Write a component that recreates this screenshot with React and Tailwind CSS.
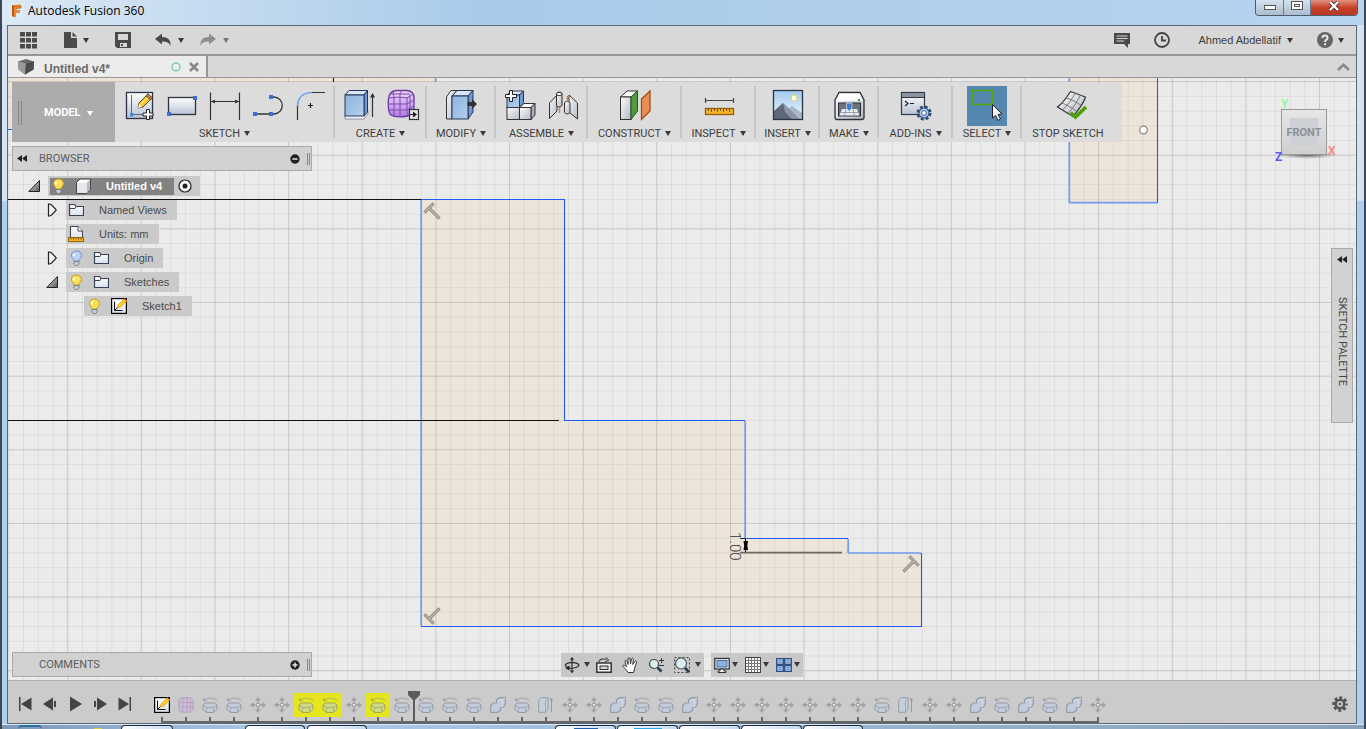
import React from "react";

const UI = "font-['Roboto','Liberation_Sans',sans-serif]";

function Caret({ className = "text-[#3a3a3a]" }) {
  return (
    <svg width="6" height="5" viewBox="0 0 6 5" className={`shrink-0 ${className}`} aria-hidden="true">
      <path d="M0 0H6L3 5Z" fill="currentColor" />
    </svg>
  );
}

function Icon({ size = 16, children, className = "" }) {
  return (
    <svg width={size} height={size} viewBox={`0 0 ${size} ${size}`} className={`shrink-0 ${className}`} fill="none" aria-hidden="true">
      {children}
    </svg>
  );
}

/* ---------- gradients shared by all icons ---------- */
function Defs() {
  return (
    <svg width="0" height="0" className="absolute" aria-hidden="true">
      <defs>
        <linearGradient id="paper" x1="0" y1="0" x2="0" y2="1"><stop offset="0" stopColor="#fff" /><stop offset="1" stopColor="#b9c3d4" /></linearGradient>
        <linearGradient id="sheet" x1="0" y1="0" x2="0" y2="1"><stop offset="0" stopColor="#fff" /><stop offset="1" stopColor="#dbe2ec" /></linearGradient>
        <linearGradient id="blue" x1="0" y1="0" x2="1" y2="1"><stop offset="0" stopColor="#8db3df" /><stop offset="1" stopColor="#b5cfec" /></linearGradient>
        <linearGradient id="grey" x1="0" y1="0" x2="1" y2="1"><stop offset="0" stopColor="#fbfbfc" /><stop offset="1" stopColor="#b4bac4" /></linearGradient>
        <linearGradient id="violet" x1="0" y1="0" x2="0" y2="1"><stop offset="0" stopColor="#ecdcf8" /><stop offset="1" stopColor="#b67be6" /></linearGradient>
        <linearGradient id="sky" x1="0" y1="0" x2="0" y2="1"><stop offset="0" stopColor="#9fc9ee" /><stop offset="1" stopColor="#f2f9fd" /></linearGradient>
        <linearGradient id="tri" x1="0" y1="0" x2="1" y2="1"><stop offset="0" stopColor="#eee" /><stop offset="1" stopColor="#555" /></linearGradient>
      </defs>
    </svg>
  );
}

const Pencil = () => (
  <g>
    <path d="M19 22L20 17L29 8L33 12L24 21Z" fill="#fbc62b" stroke="#5b4417" />
    <path d="M27 10L29 7.500L33.500 12L31.500 14Z" fill="#b97d4a" stroke="#5b4417" strokeWidth=".8" />
    <path d="M19 22L20 18L23 21Z" fill="#fff" />
    <path d="M21.500 18.500L28.500 11.500" stroke="#fff1a8" />
  </g>
);

const toolIcons = {
  sketch: (
    <>
      <rect x="7.500" y="6.500" width="26" height="26" fill="url(#paper)" stroke="#2b3246" strokeWidth="1.300" />
      <path d="M12.500 9V28.500H30" stroke="#5f6b86" />
      <rect x="11" y="27" width="3.500" height="3.500" fill="#3f8ce0" />
      <Pencil />
      <path d="M27.500 23.500h3v3.500h3.500v3h-3.500v3.500h-3v-3.500h-3.500v-3h3.500z" fill="#fff" stroke="#222" />
    </>
  ),
  rect: (
    <>
      <rect x="6.500" y="11.500" width="27" height="17" fill="url(#paper)" stroke="#2e3340" strokeWidth="1.300" />
      <rect x="31" y="10" width="4" height="4" fill="#3b6fd0" />
      <rect x="5" y="26" width="4" height="4" fill="#3b6fd0" />
    </>
  ),
  dimension: (
    <>
      <path d="M5.500 6.500V34M34.500 6.500V34" stroke="#333" strokeWidth="1.200" />
      <path d="M6 15.500H34" stroke="#333" />
      <path d="M6 15.500L10 13.500V17.500ZM34 15.500L30 13.500V17.500Z" fill="#333" />
    </>
  ),
  line: (
    <>
      <path d="M7 28H26C37 27 37 12 26 11H23" stroke="#333" strokeWidth="1.300" />
      <rect x="5" y="26" width="4" height="4" fill="#3b6fd0" />
      <rect x="21" y="26" width="4" height="4" fill="#3b6fd0" />
      <rect x="21" y="9" width="4" height="4" fill="#3b6fd0" />
    </>
  ),
  fillet: (
    <>
      <path d="M6.500 34V20M20.500 6.500H34" stroke="#333" strokeWidth="1.200" />
      <path d="M6.500 20C7 11 11 7 20.500 6.500" stroke="#6a9ee8" strokeWidth="1.600" />
      <path d="M19.500 17V22M17 19.500H22" stroke="#222" strokeWidth="1.200" />
    </>
  ),
  extrude: (
    <>
      <path d="M6 30V33H25L29 28V25" fill="#f4f6f8" stroke="#8a93a5" />
      <path d="M6 9L10 4.500H28.500L25 9Z" fill="#dce8f6" stroke="#223658" />
      <path d="M25 9L28.500 4.500V26L25 30Z" fill="#6f9bd0" stroke="#223658" />
      <rect x="6" y="9" width="19" height="21" fill="url(#blue)" stroke="#223658" />
      <path d="M33.500 9V31" stroke="#333" strokeWidth="1.200" />
      <path d="M33.500 7L31 11.500H36Z" fill="#333" />
    </>
  ),
  form: (
    <>
      <path d="M6.500 13C7 8 10 4.500 15 4.500H25C30 5 32 8 32 12V22C32 25 29 28 26 30C20 31 12 31 9 29C6 27 6 17 6.500 13Z" fill="url(#violet)" stroke="#6b3aa0" strokeWidth="1.300" />
      <path d="M7 12C12 11 20 11 25 12C28 10 30 9 31 8M25 12V30M12 5C10 8 12 10 12 12V30M20 4.500C17 8 18 10 18 12V30M8 8H28M7 18H25L32 14M7 24H25L32 20M28 9V28" stroke="#7d48b3" />
      <rect x="27.500" y="23.500" width="9" height="10" fill="#e4e4e4" stroke="#333" strokeWidth="1.200" />
      <path d="M28 28H31V25.500L35 28.500L31 31.500V29H28Z" fill="#222" />
    </>
  ),
  modify: (
    <>
      <path d="M5.500 11L10 4.500H16L11 10V33H5.500Z" fill="url(#grey)" stroke="#333" />
      <path d="M11 10L16 4.500H32L27 10Z" fill="#d7e5f5" stroke="#223658" />
      <path d="M27 10L32 4.500V26L27 33Z" fill="#6f9bd0" stroke="#223658" />
      <rect x="11" y="10" width="16" height="23" fill="url(#blue)" stroke="#223658" />
      <path d="M26.500 16H31V13L36 18L31 23V20H26.500Z" fill="#333" />
    </>
  ),
  assemble: (
    <>
      <path d="M7 9L11 5H23.500L19.500 9Z" fill="#dce8f6" stroke="#223658" />
      <path d="M19.500 9L23.500 5V17L19.500 21Z" fill="#6f9bd0" stroke="#223658" />
      <rect x="7" y="9" width="12.500" height="12.500" fill="url(#blue)" stroke="#223658" />
      <path d="M20 21.500L24 17.500H35L31 21.500Z" fill="#fff" stroke="#333" />
      <path d="M31 21.500L35 17.500V29L31 33.500Z" fill="#a9afb9" stroke="#333" />
      <rect x="7" y="21.500" width="12.500" height="12" fill="url(#grey)" stroke="#333" />
      <rect x="19.500" y="21.500" width="11.500" height="12" fill="url(#grey)" stroke="#333" />
      <path d="M9.500 4.500h3v4h4v3h-4v4h-3v-4h-4v-3h4z" fill="#fff" stroke="#222" />
    </>
  ),
  joint: (
    <>
      <path d="M6.500 17L14 9V25L6.500 32.500Z" fill="url(#grey)" stroke="#333" />
      <path d="M13.500 8C13.500 5.500 19 5.500 19 8V19C19 21.500 13.500 21.500 13.500 19Z" fill="url(#grey)" stroke="#333" />
      <ellipse cx="16.200" cy="8" rx="2.800" ry="1.600" fill="#fff" stroke="#333" />
      <path d="M26 9L34.500 17V33L26 26Z" fill="url(#grey)" stroke="#333" />
      <path d="M21.500 17C21.500 15 27 15 27 17V26C27 28.500 21.500 28.500 21.500 26Z" fill="url(#grey)" stroke="#333" />
      <path d="M16.500 21V27M24.500 10V16" stroke="#e07b28" strokeWidth="1.400" />
    </>
  ),
  construct: (
    <>
      <path d="M5.500 11L12 5H22.500L16 11Z" fill="#fff" stroke="#333" />
      <rect x="5.500" y="11" width="10.500" height="22.500" fill="url(#grey)" stroke="#333" />
      <path d="M16 11L22.500 5V25L16 33.500Z" fill="#4f9b3f" stroke="#26541d" />
      <path d="M26.500 13L35 5V25L26.500 33.500Z" fill="#e98f55" stroke="#a04c1b" strokeWidth="1.300" />
    </>
  ),
  inspect: (
    <>
      <path d="M6.500 12V17M34.500 12V17M6.500 14.500H34.500" stroke="#444" strokeWidth="1.200" />
      <rect x="6.500" y="22.500" width="28" height="6" fill="#f3b72a" stroke="#96590d" strokeWidth="1.300" />
      <path d="M9.500 23V25M12.500 23V26M15.500 23V25M18.500 23V26M21.500 23V25M24.500 23V26M27.500 23V25M30.500 23V26" stroke="#7b4a0d" />
    </>
  ),
  insert: (
    <>
      <rect x="5.500" y="4.500" width="29" height="29" fill="url(#sky)" />
      <circle cx="26" cy="12" r="3" fill="#fffbe0" stroke="#f3cf63" />
      <path d="M16 26L24 20L34 27V33H16Z" fill="#a9b8c9" />
      <path d="M6 25L15 17L31 33H6Z" fill="#5d6878" />
      <path d="M15 17L31 33H24L17 26Z" fill="#8b97a7" />
      <rect x="5.500" y="4.500" width="29" height="29" stroke="#2c3340" strokeWidth="1.300" />
    </>
  ),
  make: (
    <>
      <path d="M6 14L10 6.500H31L35 14V31C35 33 34 33.500 33 33.500H8C6 33.500 6 32 6 31Z" fill="url(#grey)" stroke="#2c2f36" strokeWidth="1.300" />
      <path d="M7 14.500L10.500 7.500H30.500L34 14.500Z" fill="#fff" />
      <rect x="9.500" y="17" width="22" height="13" fill="#6d727a" stroke="#2c2f36" />
      <path d="M13 23H28L30.500 29.500H10.500Z" fill="#e9edf2" />
      <path d="M12 26.500H29M17 23L15.500 29M24 23L25.500 29" stroke="#8a919c" strokeWidth=".8" />
      <path d="M17.500 17H23V22L20.200 25.500L17.500 22Z" fill="#3e7fd6" stroke="#dbe8f8" strokeWidth=".7" />
      <rect x="29" y="13" width="2" height="2" fill="#2f9b2f" />
    </>
  ),
  addins: (
    <>
      <rect x="5.500" y="6.500" width="23" height="22" fill="url(#paper)" stroke="#33394a" strokeWidth="1.200" />
      <rect x="6" y="7" width="22" height="4" fill="#8a919f" />
      <path d="M5.500 11.500H28.500" stroke="#33394a" />
      <path d="M9 15L12 17.500L9 20M14 17.500H18" stroke="#222" strokeWidth="1.200" />
      <circle cx="28" cy="27" r="5.500" stroke="#2c4870" strokeWidth="4" strokeDasharray="2.600 1.720" />
      <circle cx="28" cy="27" r="5" fill="#b8d0ec" stroke="#35598c" strokeWidth="1.200" />
      <circle cx="28" cy="27" r="2.400" fill="#fff" stroke="#35598c" />
    </>
  ),
  select: (
    <>
      <rect x="5.500" y="4.500" width="20" height="14" stroke="#4fa80c" strokeWidth="1.600" />
      <path d="M25.500 18.500V32L28.500 29.500L31 34.500L33.500 33L31 28.500L35 28Z" fill="#f2f4f8" stroke="#222" />
    </>
  ),
  stop: (
    <g transform="translate(4 0)">
      <path d="M18.500 5.500L33.500 11C31 19 26 24 21 30.500L5.500 21C11 17 15 11 18.500 5.500Z" fill="url(#grey)" stroke="#333" strokeWidth="1.200" />
      <path d="M14 12C19 13 24 16 29.500 19.500M10 17C15 19 20 22 25 25.500M23.500 7C20 13 16 19 10.500 24M28.500 9C25 16 21 22 16 27.500" stroke="#777" />
      <path d="M18.500 27L23.500 31L34 21" stroke="#4ba100" strokeWidth="3.600" />
    </g>
  ),
};

const groups = [
  { label: "SKETCH", w: "w-[220px]", icons: ["sketch", "rect", "dimension", "line", "fillet"] },
  { label: "CREATE", w: "w-[92px]", icons: ["extrude", "form"] },
  { label: "MODIFY", w: "w-[69px]", icons: ["modify"] },
  { label: "ASSEMBLE", w: "w-[92px]", icons: ["assemble", "joint"] },
  { label: "CONSTRUCT", w: "w-[94px]", icons: ["construct"] },
  { label: "INSPECT", w: "w-[74px]", icons: ["inspect"] },
  { label: "INSERT", w: "w-[64px]", icons: ["insert"] },
  { label: "MAKE", w: "w-[59px]", icons: ["make"] },
  { label: "ADD-INS", w: "w-[74px]", icons: ["addins"] },
  { label: "SELECT", w: "w-[69px]", icons: ["select"], active: true },
  { label: "STOP SKETCH", w: "w-[100px] pr-2", icons: ["stop"], plain: true },
];

function Toolbar() {
  return (
    <div className={`flex h-[60px] w-max bg-[#dcdcdc] ${UI}`} role="toolbar" aria-label="Modeling tools">
      <button className="flex w-[103px] items-center bg-[#acacac] pl-1.5 pt-0.5 text-[11px] font-bold text-white">
        <span className="mr-[22px] h-6 w-1 border-x border-[#858585]" />
        MODEL
        <Caret className="ml-1.5 text-white" />
      </button>
      {groups.map((g) => (
        <div key={g.label} className={`flex ${g.w} items-start`}>
          <div className="flex flex-1 flex-col items-center gap-px pt-1">
            <div className="flex gap-[3px]">
              {g.icons.map((n) => (
                <button key={n} aria-label={n} className={g.active ? "bg-[#5587b0]" : ""}>
                  <Icon size={40}>{toolIcons[n]}</Icon>
                </button>
              ))}
            </div>
            <button className="flex items-center gap-1 whitespace-nowrap text-[11px] leading-[14px] text-[#3c3c3c]">
              {g.label}
              {!g.plain && <Caret className="mb-0.5 text-[#3a3a3a]" />}
            </button>
          </div>
          {!g.plain && <span className="-ml-px h-[52px] w-0.5 self-center bg-[#c6c6c6]" />}
        </div>
      ))}
    </div>
  );
}

/* ---------- browser tree ---------- */
const Bulb = ({ on = true }) => (
  <Icon>
    <path d="M8.500 1C5 1 3.500 3.500 3.500 5.500C3.500 8 6 9 6 11H11C11 9 13.500 8 13.500 5.500C13.500 3.500 12 1 8.500 1Z" fill={on ? "#fde05a" : "#bcd2f7"} stroke={on ? "#c39a1e" : "#6f8fc9"} />
    <path d="M6.500 3.500C5.500 4.500 5.500 5.500 6 6.500" stroke="#fff" strokeWidth="1.400" />
    <path d="M6 11.500H11V14L9.500 15.500H7.500L6 14Z" fill="#c8ccd4" stroke="#6b7280" strokeWidth=".8" />
  </Icon>
);
const Folder = () => (
  <Icon>
    <path d="M1.500 13.500V2.500H6.500L8 4.500H15.500V13.500Z" fill="url(#sheet)" stroke="#3a4255" strokeWidth="1.200" />
    <path d="M2 6.500H7L8 5" stroke="#3a4255" />
  </Icon>
);
const Cube = () => (
  <Icon>
    <path d="M1.500 4.500L5 1H15.500V11L12 15.500H1.500Z" fill="#fafafa" stroke="#444" />
    <path d="M12 4.500L15 1.500V11L12 15Z" fill="#b8bcc4" />
    <rect x="2" y="5" width="10" height="10" fill="#e6e8ec" />
  </Icon>
);
const Units = () => (
  <Icon>
    <path d="M2.500 12V.5H10L14.500 5V12Z" fill="url(#sheet)" stroke="#3a4255" />
    <path d="M10 .5V5H14.500" fill="#fff" stroke="#3a4255" />
    <rect x=".5" y="11.500" width="15" height="4" fill="#f0b429" stroke="#9a6410" />
    <path d="M3 12V13.500M5.500 12V13.500M8 12V13.500M10.500 12V13.500M13 12V13.500" stroke="#7b4a0d" />
  </Icon>
);
const SketchDoc = () => (
  <Icon>
    <rect x=".6" y=".6" width="14.800" height="14.800" fill="url(#sheet)" stroke="#000" strokeWidth="1.200" />
    <path d="M3.500 3.500V12.500H11.500M3.500 12.500L7 9" stroke="#111" />
    <path d="M6 10L7.500 6.500L13.500 .5L16 3L9.500 9Z" fill="#ffcf1f" stroke="#c98a10" strokeWidth=".6" />
    <path d="M12.800 1.200L13.500 .5L16 3L15.300 3.700Z" fill="#d9532c" />
  </Icon>
);
const Closed = () => (
  <Icon size={14}><path d="M2.500 1V13L5 12.500L10 7.500V6.500L5 1.500Z" fill="#f6f6f6" stroke="#222" strokeWidth="1.200" /></Icon>
);
const Open = () => (
  <Icon size={14}><path d="M11.500 1.500V12.500H.8Z" fill="url(#tri)" stroke="#222" /></Icon>
);

const tree = [
  { text: "Named Views", pad: "pl-[34px]", arrow: <Closed />, icons: [<Folder key="f" />] },
  { text: "Units: mm", pad: "pl-[54px]", icons: [<Units key="u" />] },
  { text: "Origin", pad: "pl-[34px]", arrow: <Closed />, icons: [<Bulb key="b" on={false} />, <Folder key="f" />] },
  { text: "Sketches", pad: "pl-[34px]", arrow: <Open />, icons: [<Bulb key="b" />, <Folder key="f" />] },
  { text: "Sketch1", pad: "pl-[72px]", icons: [<Bulb key="b" />, <SketchDoc key="s" />] },
];

function Tree() {
  return (
    <ul className="pt-[3px] font-['Liberation_Sans',Arial,sans-serif] text-[11px] text-[#4a4a4a]">
      <li className="flex h-6 items-center pl-4">
        <button aria-label="Collapse document" className="w-5"><Open /></button>
        <div className="flex h-5 items-center bg-[#c9c9c9] pl-0.5">
          <button className="flex h-[17px] items-center gap-[9px] bg-[#828282] pr-3 font-bold text-white">
            <Bulb />
            <Cube />
            <span className="pl-1.5">Untitled v4</span>
          </button>
          <button aria-label="Activate component" className="mx-[3px] pr-1">
            <Icon>
              <circle cx="8" cy="8" r="6" fill="#fff" stroke="#222" strokeWidth="1.200" />
              <circle cx="8" cy="8" r="2.500" fill="#222" />
            </Icon>
          </button>
        </div>
      </li>
      {tree.map((n) => (
        <li key={n.text} className={`flex h-6 items-center ${n.pad}`}>
          {n.arrow && <button aria-label={`Toggle ${n.text}`} className="w-5">{n.arrow}</button>}
          <button className="flex h-5 items-center gap-[9px] bg-[#cacaca] pl-0.5 pr-2.5">
            {n.icons}
            <span className="pl-1.5">{n.text}</span>
          </button>
        </li>
      ))}
    </ul>
  );
}

function PanelBar({ title, open }) {
  return (
    <div className={`flex h-[25px] w-[300px] items-center border border-[#a9a9a9] bg-[#d1d1d1] pl-1 pr-px text-[11px] text-[#5c5c5c] ${UI}`}>
      <span className="w-[22px]">
        {open && (
          <button aria-label="Collapse browser" className="block">
            <svg width="10" height="7" viewBox="0 0 10 7"><path d="M5 0V7L0 3.500ZM10 0V7L5 3.500Z" fill="#222" /></svg>
          </button>
        )}
      </span>
      <span className="flex-1 pt-0.5">{title}</span>
      <button aria-label={open ? "Hide" : "Show"} className="mr-[7px]">
        <svg width="10" height="10" viewBox="0 0 10 10">
          <circle cx="5" cy="5" r="4.700" fill="#222" />
          <path d={open ? "M2.500 5H7.500" : "M2.500 5H7.500M5 2.500V7.500"} stroke="#e6e6e6" strokeWidth="1.500" />
        </svg>
      </button>
      <span className="h-3 w-[3px] border-x border-[#858585]" />
    </div>
  );
}

/* ---------- sketch drawing ---------- */
const STEP = 14.728;
const verticals = Array.from({ length: 140 }, (_, i) => ({ p: 67.7 + (i - 5) * STEP, major: i % 5 === 0 }));
const horizontals = Array.from({ length: 80 }, (_, i) => ({ p: 81.6 + i * STEP, major: i % 5 === 0 }));

const Constraint = ({ x, y, r }) => (
  <g transform={`translate(${x} ${y}) rotate(${r})`}>
    <path d="M-6.500 0H6.500M0 0V15" stroke="#96918a" strokeWidth="3.200" />
    <path d="M-5.500 0H5.500M0 0V14" stroke="#bcb6ad" strokeWidth="1.200" />
  </g>
);

function SketchCanvas() {
  return (
    <svg className="absolute inset-0 h-full w-full" aria-hidden="true">
      <g transform="translate(-8 -78)">
        <g fill="#ede5da">
          <path d="M8 78H436V129H8Z" />
          <path d="M1069 78H1157V203H1069Z" />
          <path d="M421 199H564V420H745V538H848V553H921V626H421Z" />
        </g>
        <g stroke="#000">
          {verticals.map((l) => <path key={l.p} d={`M${l.p} 78V2000`} strokeOpacity={l.major ? 0.15 : 0.06} />)}
          {horizontals.map((l) => <path key={l.p} d={`M8 ${l.p}H3000`} strokeOpacity={l.major ? 0.15 : 0.06} />)}
        </g>
        <g fill="none" stroke="#7399f0" strokeWidth="1.700">
          <path d="M435.700 78V129M1069.300 78V203M1069 202.700H1157" />
          <path d="M421.200 200V626M745.200 421V538M848.200 539V553M848 553H921" />
        </g>
        <path d="M8 199.500H421M8 420.500H559M333.500 78V84" stroke="#111" fill="none" />
        <g fill="none" stroke="#1f5cf2" strokeWidth="1.100">
          <path d="M8 129.500H435M1157.500 78V203" />
          <path d="M421 199.500H564.500V420.500H745M745 538.500H848M921.500 553V626.500H421" />
        </g>
        <path d="M740 552.700H842" stroke="#6d6863" strokeWidth="1.700" />
        <path d="M740 538.500H746" stroke="#222" />
        <path d="M745.500 539V552" stroke="#000" />
        <path d="M743.500 541H748L747.300 545.500L748 550H743.500L744.200 545.500Z" fill="#000" />
        <text transform="translate(730 532) rotate(90)" fontSize="15" fill="#333" fontFamily="Roboto, sans-serif" fontWeight="300">1.00</text>
        <Constraint x={429} y={208} r={-45} />
        <Constraint x={429} y={619} r={225} />
        <Constraint x={914} y={561} r={45} />
        <circle cx="1143.500" cy="130" r="3.800" fill="#fff" stroke="#8a8a8a" strokeWidth="1.300" />
      </g>
    </svg>
  );
}

function ViewCube() {
  return (
    <button aria-label="Front view" className="mr-3">
      <svg width="76" height="76" viewBox="-6 0 76 76" className="block">
        <defs>
          <linearGradient id="face" x1="0" y1="0" x2="0" y2="1"><stop offset="0" stopColor="#e6e6e6" /><stop offset="1" stopColor="#cfcfcf" /></linearGradient>
          <radialGradient id="shade"><stop offset="0" stopColor="#444" stopOpacity=".85" /><stop offset="1" stopColor="#777" stopOpacity="0" /></radialGradient>
        </defs>
        <ellipse cx="33" cy="63" rx="31" ry="4" fill="url(#shade)" />
        <rect x="7.500" y="17.500" width="45" height="45" fill="url(#face)" stroke="#999" />
        <rect x="16" y="26" width="28" height="28" fill="#cdd0d4" />
        <g fontFamily="Roboto, sans-serif" fontWeight="bold">
          <text x="30" y="44" textAnchor="middle" fontSize="11" fill="#8b9096">FRONT</text>
          <text x="7" y="16" fontSize="12" fill="#98f59a">Y</text>
          <text x="54" y="63" fontSize="12" fill="#f58a8a">X</text>
          <text x="1" y="69" fontSize="12" fill="#5a5af0">Z</text>
        </g>
      </svg>
    </button>
  );
}

/* ---------- navigation bar ---------- */
const nav = {
  Orbit: (
    <>
      <path d="M8 1V15M6.500 3L8 .8L9.500 3M6.500 13.500L8 15.500L9.500 13.500" stroke="#333" strokeWidth="1.200" />
      <path d="M3 9.500C-1 8 3 5.500 8 5.500C14 5.500 17 8 13 10C11 11 7 11.500 4 11.200" stroke="#333" strokeWidth="1.300" />
      <path d="M1 11L5.500 8.500V13.500Z" fill="#222" />
    </>
  ),
  "Look at": (
    <>
      <path d="M.8 6H15.200V15.200H.8Z" fill="#f2f2f2" stroke="#333" strokeWidth="1.500" />
      <rect x="4" y="9" width="8" height="3.500" stroke="#333" fill="#cfd4dc" />
      <path d="M2.500 5C4 2 7 1.500 10 2.500M10 .5L12.500 3.200L9 4.800" stroke="#555" strokeWidth="1.200" />
    </>
  ),
  Pan: (
    <path d="M6 15.500C5 13 2.500 11.500 1 9.500C.5 8 2 7.500 3.500 9L4.500 10L3 4.500C3 3 4.500 3 5 4.500L6.200 7.500L6 2C6 .3 8 .3 8 2L8.500 7L9.500 2C10 .5 11.600 1 11.300 2.500L10.800 7.500L13 4.500C14 3.500 15 4.300 14.500 5.500C13.500 8 13 10 12.500 12L11.500 15.500Z" fill="#fff" stroke="#333" />
  ),
  Zoom: (
    <>
      <circle cx="6" cy="7" r="4.500" fill="#d8eef2" stroke="#444" strokeWidth="1.200" />
      <path d="M9.500 10.500L13.500 14.500" stroke="#2c3a4c" strokeWidth="2.600" />
      <path d="M13.500 1V6M11 3.500H16M11 8.500H16" stroke="#333" />
    </>
  ),
  Fit: (
    <>
      <path d="M.5 .5H15.500V15.500H.5Z" stroke="#444" strokeDasharray="2 2" />
      <circle cx="7" cy="6.500" r="5.500" fill="#d8eef2" stroke="#555" strokeWidth="1.200" />
      <path d="M11 11L15 15" stroke="#2c3a4c" strokeWidth="2.800" />
    </>
  ),
  Display: (
    <>
      <rect x=".8" y="1.500" width="14.400" height="10.500" fill="#fff" stroke="#333" strokeWidth="1.300" />
      <rect x="3" y="3.500" width="10" height="6.500" fill="#8db3df" stroke="#3d69a5" />
      <path d="M6 12H10V14H12V15.500H4V14H6Z" fill="#eee" stroke="#333" />
    </>
  ),
  Grid: (
    <>
      <rect x=".5" y=".5" width="15" height="15" fill="#f4f4f4" stroke="#444" />
      <path d="M3.500 1V15M6.500 1V15M9.500 1V15M12.500 1V15M1 3.500H15M1 6.500H15M1 9.500H15M1 12.500H15" stroke="#777" />
    </>
  ),
  Viewports: (
    <>
      <path d="M.7 1.700H7.300V7.300H.7ZM8.700 1.700H15.300V7.300H8.700ZM.7 8.700H7.300V14.300H.7ZM8.700 8.700H15.300V14.300H8.700Z" fill="#a9c8ec" stroke="#2f4f80" strokeWidth="1.300" />
      <path d="M3 3.500H5V5.500H3ZM11 3.500H13V5.500H11ZM3 10.500H5V12.500H3ZM11 10.500H13V12.500H11Z" fill="#dfeaf8" stroke="#5f86bd" strokeWidth=".8" />
    </>
  ),
};

function NavButton({ name, caret, className = "gap-0.5" }) {
  return (
    <button aria-label={name} className={`flex items-center ${className}`}>
      <Icon>{nav[name]}</Icon>
      {caret && <Caret />}
    </button>
  );
}

/* ---------- timeline ---------- */
const feature = {
  s: <SketchDoc />,
  f: (
    <Icon className="opacity-50">
      <path d="M1 5C1 2 3 .8 5 .8H12C14 1 15.200 3 15.200 5V11C15 13 14 14.500 12 15.200H5C2 15 1 14 1 11Z" fill="#cfb2e0" stroke="#9a78b5" />
      <path d="M5 1V15M9 1V15M12.500 2V14M1 5.500H15M1 10H15" stroke="#9a78b5" strokeWidth=".8" />
    </Icon>
  ),
  r: (
    <Icon className="opacity-55">
      <path d="M1.500 3.500C5 .5 11 .5 15 3M2 .8L1.300 3.800L4.500 4" stroke="#7e848c" />
      <path d="M1 8L3.500 6H12.500L15 8V12.500L11.500 15.500H4.500L1 12.500Z" fill="#bfd0e2" stroke="#69788f" />
      <path d="M1 8L4.500 10.500H11.500L15 8M4.500 10.500V15.500M11.500 10.500V15.500" stroke="#69788f" strokeWidth=".8" />
    </Icon>
  ),
  m: (
    <Icon className="opacity-80">
      <path d="M8 0L11 3.500H9V5.500H7V3.500H5ZM8 16L5 12.500H7V10.500H9V12.500H11ZM0 8L3.500 5V7H5.500V9H3.500V11ZM16 8L12.500 11V9H10.500V7H12.500V5Z" fill="#9a9a9a" />
      <rect x="6.500" y="6.500" width="3" height="3" fill="#eee" stroke="#9a9a9a" />
    </Icon>
  ),
  j: (
    <Icon className="opacity-55">
      <path d="M6.500 3L9 .7H15.300V8L12.500 10.500H10.500V13L8 15.300H.7V8.500L3 6H6.500Z" fill="#b9cfe8" stroke="#69788f" strokeWidth="1.200" />
      <path d="M7 3.500H12.500V10M12.500 3.500L15 1" stroke="#dde9f6" />
    </Icon>
  ),
  e: (
    <Icon className="opacity-55">
      <path d="M.7 3.500L3 .7H10V12L7.500 15.300H.7Z" fill="#c4d3e4" stroke="#69788f" />
      <path d="M7.500 3.500V15M7.500 3.500L10 1" stroke="#69788f" strokeWidth=".8" />
      <path d="M13.500 15V2M12 3.500L13.500 1L15 3.500" stroke="#777" />
    </Icon>
  ),
};
const order = "sfrrmmrrmrrrrrjremmjrrjmmmmmmmremmjrjrjm".split("");
const highlighted = [6, 7, 9];

const playback = [
  ["First", <path key="a" d="M2 1V15H3.500V1ZM14.500 1.500V14.500L4 8Z" fill="#444" />],
  ["Back", <path key="a" d="M1 8L11 1.500V14.500ZM12 5H14V11H12Z" fill="#444" />],
  ["Play", <path key="a" d="M3 .5L15 8L3 15.500Z" fill="#444" />],
  ["Forward", <path key="a" d="M15 8L5 1.500V14.500ZM2 5H4V11H2Z" fill="#444" />],
  ["Last", <path key="a" d="M12.500 1V15H14V1ZM1.500 1.500V14.500L12 8Z" fill="#444" />],
];

function Gear() {
  return (
    <Icon>
      <circle cx="8" cy="8" r="6.300" stroke="#555" strokeWidth="3" strokeDasharray="2.800 2.148" strokeDashoffset="1.400" />
      <circle cx="8" cy="8" r="4.300" stroke="#555" strokeWidth="2.600" />
      <circle cx="8" cy="8" r="1.300" fill="#555" />
    </Icon>
  );
}

function Timeline() {
  return (
    <footer className="flex h-[43px] shrink-0 border-t border-[#b0b0b0] bg-[#cbcbcb]">
      <div className="flex w-[142px] shrink-0 items-center gap-[9px] pl-[9px] pt-1">
        {playback.map(([n, d]) => (
          <button key={n} aria-label={n}><Icon>{d}</Icon></button>
        ))}
      </div>
      <div className="flex-1 pt-3">
        <ol className="flex">
          {order.map((t, i) => (
            <li key={i} className="relative flex w-6 shrink-0 flex-col items-center">
              <button aria-label={`Feature ${i + 1}`} className={`flex size-6 items-center justify-center ${highlighted.includes(i) ? "bg-[#e6e61e]" : ""}`}>
                {feature[t]}
              </button>
              <span className="h-1 w-0.5 bg-[#666]" />
              {i === 10 && (
                <svg width="12" height="32" viewBox="0 0 12 32" className="absolute -right-1.5 -top-0.5" aria-hidden="true">
                  <path d="M0 0H12V4L7 9V32H5V9L0 4Z" fill="#5c5c5c" />
                </svg>
              )}
            </li>
          ))}
        </ol>
        <div className="ml-[11px] h-0.5 w-[938px] bg-[#666]" />
      </div>
      <button aria-label="Timeline settings" className="mr-2 mt-1 self-center"><Gear /></button>
    </footer>
  );
}

/* ---------- window chrome ---------- */
function TitleBar() {
  return (
    <header className="flex h-[25px] shrink-0 items-start justify-between bg-linear-to-r from-[#dbe8f5] via-[#a9cbe9] via-35% to-[#b7d3ef] px-1.5">
      <div className="flex h-[22px] items-center gap-1">
        <svg width="16" height="16" viewBox="0 0 16 16" aria-hidden="true">
          <rect width="16" height="16" fill="#d9eef4" />
          <path d="M4 2L13 1.500V5L8 5.500V7H12V10H8V14.500L4 13Z" fill="#ee8a38" />
          <path d="M4 2L6 3.500V14L4 13Z" fill="#b9551a" />
          <path d="M6 3.500L13 3V5L8 5.500V7.500" stroke="#c9651f" fill="none" strokeWidth=".8" />
        </svg>
        <h1 className="font-['Open_Sans','Noto_Sans',sans-serif] text-[12px] text-black">Autodesk Fusion 360</h1>
      </div>
      <div className="flex h-4 overflow-hidden rounded-b border border-t-0 border-[#4d5b6b]">
        <button aria-label="Minimize" className="flex w-7 items-center justify-center border-r border-[#6c7c8e] bg-linear-to-b from-[#d7e2ee] to-[#a9bccf]">
          <span className="h-[5px] w-3 border border-[#555] bg-white" />
        </button>
        <button aria-label="Restore" className="flex w-[27px] items-center justify-center border-r border-[#6c7c8e] bg-linear-to-b from-[#d7e2ee] to-[#a9bccf]">
          <span className="mb-1 flex h-[9px] w-3 items-center justify-center border border-[#555] bg-white"><span className="h-[3px] w-1.5 border border-[#555]" /></span>
        </button>
        <button aria-label="Close window" className="flex w-[46px] items-center justify-center bg-linear-to-b from-[#e0917f] via-[#c9402a] to-[#b53a25] pb-1">
          <svg width="12" height="10" viewBox="0 0 12 10"><path d="M2 1L10 9M10 1L2 9" stroke="#4d2a2a" strokeWidth="4" /><path d="M2 1L10 9M10 1L2 9" stroke="#fff" strokeWidth="2.400" /></svg>
        </button>
      </div>
    </header>
  );
}

function AppBar() {
  return (
    <div className="flex h-[30px] shrink-0 items-center border-b-2 border-[#979797] bg-[#d8d8d8] px-3">
      <button aria-label="Data panel">
        <Icon size={18}>
          <path d="M0 1h5v4.500h-5zM6 1h5v4.500h-5zM12 1h5v4.500h-5zM0 7h5v4.500h-5zM6 7h5v4.500h-5zM12 7h5v4.500h-5zM0 13h5v4.500h-5zM6 13h5v4.500h-5zM12 13h5v4.500h-5z" fill="#4a4a4a" />
        </Icon>
      </button>
      <button aria-label="File" className="ml-6 flex items-center gap-[5px]">
        <Icon><path d="M2 0H9V6H15V16H2ZM10.500 0L15 4.500H10.500Z" fill="#4a4a4a" /></Icon>
        <Caret />
      </button>
      <button aria-label="Save" className="ml-[26px]">
        <Icon>
          <path d="M0 0H16V16H2L0 14Z" fill="#4a4a4a" />
          <path d="M3 2H13V8H3ZM5 11H12V15H5Z" fill="#d8d8d8" />
          <rect x="6" y="12" width="2" height="2" fill="#4a4a4a" />
        </Icon>
      </button>
      <button aria-label="Undo" className="ml-6 flex items-center gap-[7px]">
        <Icon><path d="M0 7L7 1.500V5C13 5 16 8 15.500 14C14 10.500 12 9.500 7 9.500V12.500Z" fill="#4a4a4a" /></Icon>
        <Caret />
      </button>
      <button aria-label="Redo" className="ml-4 flex items-center gap-[7px]">
        <Icon><path d="M16 7L9 1.500V5C3 5 0 8 .5 14C2 10.500 4 9.500 9 9.500V12.500Z" fill="#8d8d8d" /></Icon>
        <Caret className="text-[#777]" />
      </button>
      <span className="flex-1" />
      <button aria-label="Comments">
        <Icon>
          <path d="M0 1H16V12H14V16L10 12H0Z" fill="#4a4a4a" />
          <path d="M2.500 4H13.500M2.500 6.500H13.500M2.500 9H10" stroke="#d8d8d8" />
        </Icon>
      </button>
      <button aria-label="Job status" className="ml-6">
        <Icon>
          <circle cx="8" cy="8" r="7" stroke="#444" strokeWidth="1.800" />
          <path d="M8 4V8.500H12" stroke="#444" strokeWidth="1.800" />
        </Icon>
      </button>
      <button className="ml-7 flex items-center gap-1.5 pt-px font-['Liberation_Sans',Arial,sans-serif] text-[11px] text-[#3c3c3c]">
        Ahmed Abdellatif
        <Caret />
      </button>
      <button aria-label="Help" className="ml-6 flex items-center gap-[5px]">
        <Icon>
          <circle cx="8" cy="8" r="8" fill="#666" />
          <path d="M5.500 6C5.500 2.800 10.500 2.800 10.500 6C10.500 8 8 7.800 8 10M8 11.200V13.200" stroke="#e6e6e6" strokeWidth="2" />
        </Icon>
        <Caret />
      </button>
    </div>
  );
}

function TabStrip() {
  return (
    <div className="flex h-[22px] shrink-0 border-b border-[#979797] bg-[#d8d8d8]">
      <div className="flex w-[200px] items-center border-r-2 border-[#979797] bg-[#ececec] pl-2.5">
        <Icon>
          <path d="M0 2.500L8 0L16 2.500L15.500 10.500L7 15.500L.5 10.500Z" fill="#6a6a6a" />
          <path d="M0 2.500L8 4.500L7 15.500L.5 10.500Z" fill="#9b9b9b" />
          <path d="M8 4.500L16 2.500L15.500 10.500L7 15.500Z" fill="#4c4c4c" />
        </Icon>
        <button className="ml-2.5 flex-1 pt-1 text-left font-['Liberation_Sans',Arial,sans-serif] text-[12px] font-bold leading-4 text-[#6a6a6a]">Untitled v4*</button>
        <svg width="10" height="10" viewBox="0 0 10 10" aria-hidden="true"><circle cx="5" cy="5" r="4" fill="none" stroke="#7fcab6" strokeWidth="1.400" /></svg>
        <button aria-label="Close tab" className="ml-2 mr-[7px]">
          <svg width="10" height="10" viewBox="0 0 10 10"><path d="M1 1L9 9M9 1L1 9" stroke="#888" strokeWidth="2.600" /></svg>
        </button>
      </div>
      <button aria-label="Hide toolbar" className="ml-auto mr-1.5">
        <svg width="13" height="8" viewBox="0 0 13 8"><path d="M1 7L6.500 1.800L12 7" fill="none" stroke="#888" strokeWidth="2.600" /></svg>
      </button>
    </div>
  );
}

const Task = ({ className, mark }) => (
  <span className={`flex h-full items-end justify-center rounded-t border border-b-0 border-[#1c2a3c] bg-linear-to-r from-white to-[#c5d9f0] ${className}`}>
    {mark && <span className={`h-px ${mark}`} />}
  </span>
);

function Taskbar() {
  return (
    <div className="flex h-[5px] shrink-0 overflow-hidden border-t border-[#dbe8f5] bg-linear-to-r from-[#7d97b5] via-[#abcbea] via-20% to-[#8aa1bb]">
      <span className="ml-4 h-full w-6 rounded-t-full border-t-2 border-[#2f6ea0]" />
      <span className="ml-[52px] mt-[3px] h-px w-2 bg-[#d8d040]" />
      <Task className="ml-[19px] w-[52px]" />
      <Task className="ml-[72px] w-[60px]" />
      <Task className="ml-0.5 w-[60px]" />
      <Task className="ml-[188px] w-[61px]" mark="w-6 bg-[#1f5fae]" />
      <Task className="ml-px w-[61px]" mark="w-7 bg-[#2aa9e8]" />
      <Task className="ml-px w-[61px]" />
      <Task className="ml-px w-[61px]" />
      <Task className="ml-px w-[60px]" />
    </div>
  );
}

export default function App() {
  return (
    <div className="flex min-h-screen flex-col bg-[#3c4654]">
      <Defs />
      <div className="mx-0.5 flex flex-1 flex-col bg-[linear-gradient(#d3e3f4_201px,#b0cfee_201px)]">
        <TitleBar />
        <main className="ml-[5px] mr-[7px] flex flex-1 flex-col border border-[#5b6875]">
          <AppBar />
          <TabStrip />
          <div className="relative flex flex-1 flex-col bg-[#ebebeb]">
            <SketchCanvas />
            <div className="relative flex flex-1 justify-between pl-1 pt-1">
              <div className="flex flex-col gap-1">
                <Toolbar />
                <div>
                  <PanelBar title="BROWSER" open />
                  <Tree />
                </div>
              </div>
              <div className="flex flex-col items-end pt-2.5">
                <ViewCube />
                <button className={`mr-[3px] mt-20 flex h-[175px] w-[22px] flex-col items-center gap-[34px] border border-[#a9a9a9] bg-[#d1d1d1] pt-[7px] text-[11px] text-[#444] ${UI}`}>
                  <svg width="10" height="7" viewBox="0 0 10 7" aria-hidden="true"><path d="M5 0V7L0 3.500ZM10 0V7L5 3.500Z" fill="#222" /></svg>
                  <span className="whitespace-nowrap [writing-mode:vertical-rl]">SKETCH PALETTE</span>
                </button>
              </div>
            </div>
            <div className="relative grid grid-cols-[1fr_auto_1fr] items-center px-1 pb-[3px]">
              <PanelBar title="COMMENTS" />
              <div className="flex gap-[7px]">
                <div className="flex h-6 items-center gap-2.5 bg-[#c8c8c8] px-[3px]">
                  <NavButton name="Orbit" caret className="-mr-1 gap-1" />
                  <NavButton name="Look at" />
                  <NavButton name="Pan" />
                  <NavButton name="Zoom" />
                  <NavButton name="Fit" caret className="gap-[5px]" />
                </div>
                <div className="flex h-6 items-center gap-[7px] bg-[#c8c8c8] px-[3px]">
                  <NavButton name="Display" caret />
                  <NavButton name="Grid" caret />
                  <NavButton name="Viewports" caret />
                </div>
              </div>
            </div>
          </div>
          <Timeline />
        </main>
        <Taskbar />
      </div>
    </div>
  );
}
